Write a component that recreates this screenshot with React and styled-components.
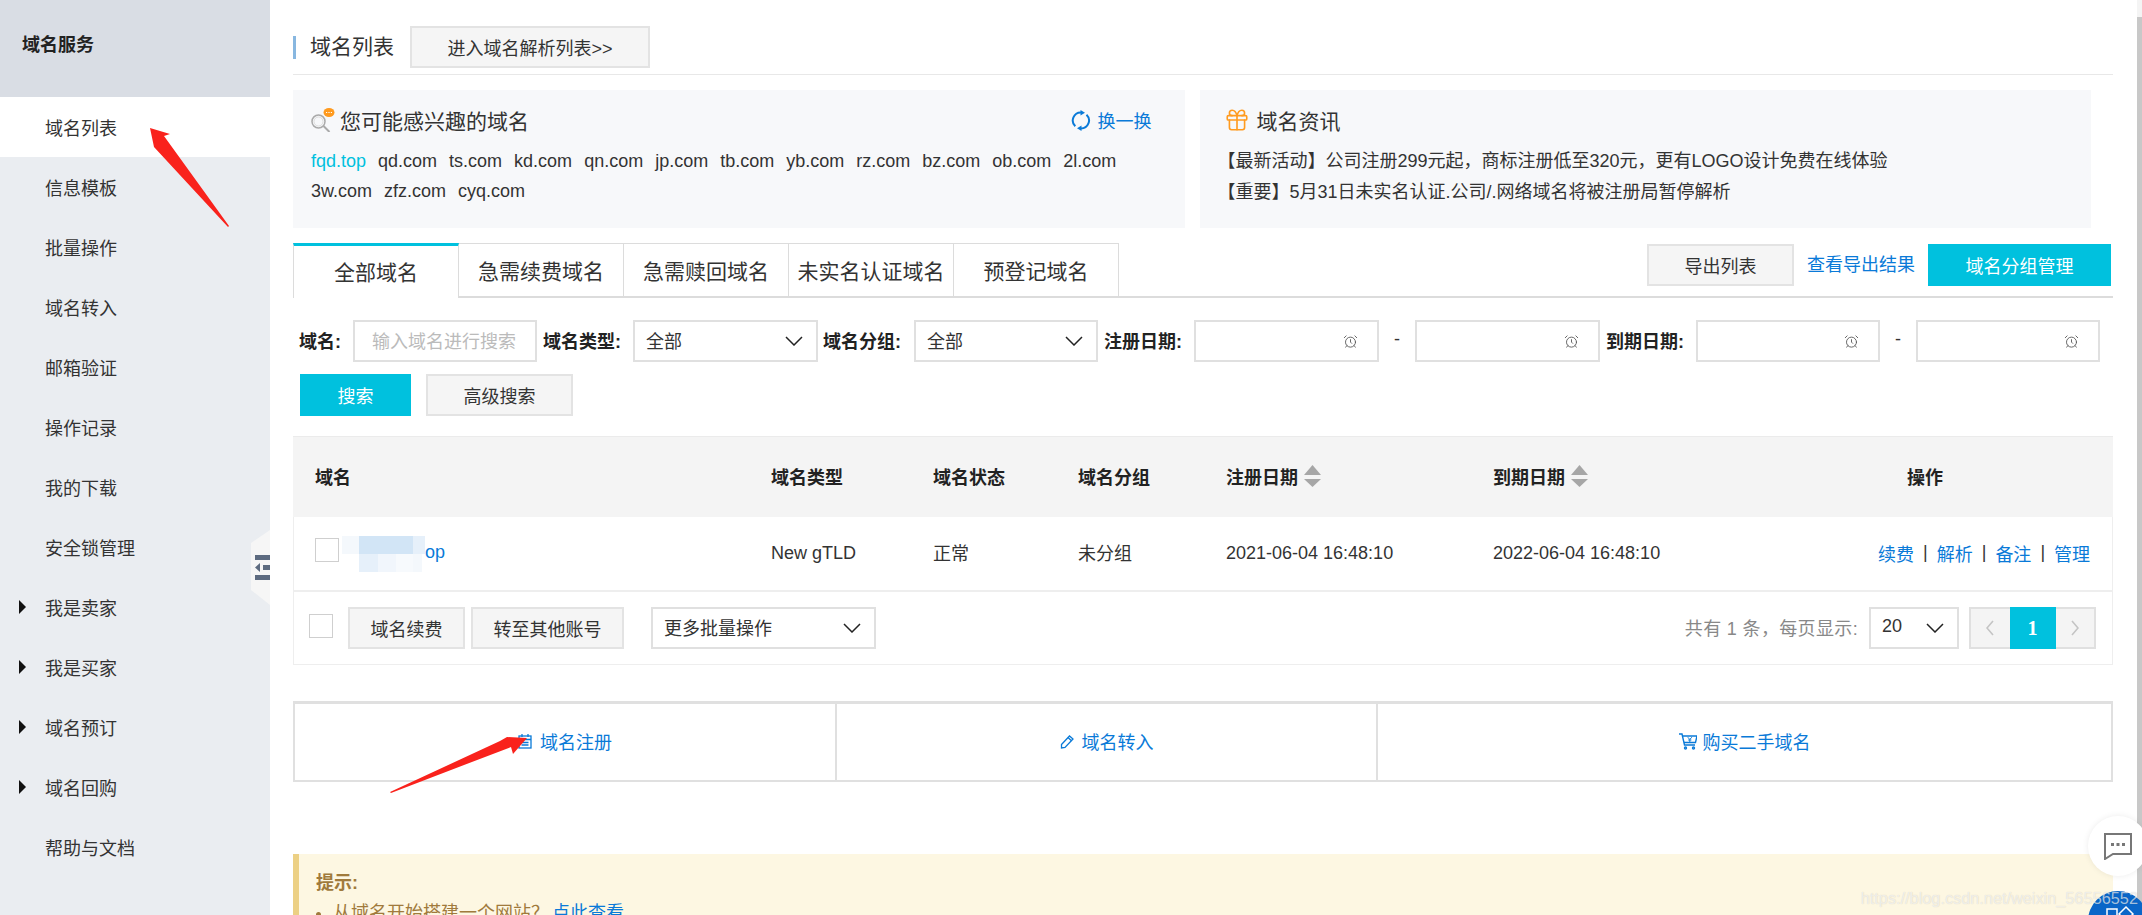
import React from 'react';
import styled, { createGlobalStyle } from 'styled-components';
import { AlarmClock, Gift } from 'lucide-react';

const CYAN = '#00c1de';
const LINK = '#0a7ad8';

const GlobalStyle = createGlobalStyle`
  html, body {
    margin: 0;
    height: 100%;
    overflow: hidden;
    background: #fff;
  }
  body {
    font-family: "Liberation Sans", "Noto Sans CJK SC", sans-serif;
    font-size: 18px;
    color: #333;
  }
  * { box-sizing: border-box; }
`;

const Page = styled.div`
  position: relative;
  display: flex;
  width: 2142px;
  height: 915px;
  overflow: hidden;
  background: #fff;
`;

/* left menu */
const Sidebar = styled.aside`
  position: relative;
  flex: none;
  width: 270px;
  background: #eaedf1;
`;

const SideTitle = styled.div`
  height: 97px;
  padding: 32px 0 0 22px;
  background: #d9dde4;
  font-weight: bold;
  line-height: 26px;
  color: #222;
`;

const SideItem = styled.div`
  display: flex;
  align-items: center;
  height: 60px;
  padding-left: 45px;
  background: ${(p) => (p.$active ? '#fff' : 'transparent')};

  ${(p) => p.$caret && `
    &::before {
      content: '';
      margin-left: -26px;
      margin-right: 19px;
      border-left: 7px solid #111;
      border-top: 7.5px solid transparent;
      border-bottom: 7.5px solid transparent;
    }
  `}
`;

const Handle = styled.svg`
  position: absolute;
  right: 0;
  top: 530px;
`;

/* main column */
const Main = styled.main`
  flex: none;
  width: 1820px;
  margin-left: 23px;
`;

const TitleBar = styled.div`
  display: flex;
  align-items: center;
  height: 75px;
  padding-top: 26px;
  padding-bottom: 6px;
  border-bottom: 1px solid #e8e8e8;
`;

const TitleMark = styled.span`
  width: 3px;
  height: 23px;
  background: #88b7e0;
`;

const PageTitle = styled.h1`
  margin: 0 16px 0 14px;
  font-size: 21px;
  font-weight: normal;
  line-height: 30px;
`;

const Button = styled.button`
  flex: none;
  width: ${(p) => p.$w}px;
  height: 42px;
  padding: 0;
  border: ${(p) => (p.$primary ? 'none' : '2px solid #e3e3e3')};
  background: ${(p) => (p.$primary ? CYAN : '#f5f5f5')};
  color: ${(p) => (p.$primary ? '#fff' : '#333')};
  font: inherit;
`;

const Panels = styled.div`
  display: flex;
  gap: 15px;
  width: 1798px;
  margin-top: 15px;
`;

const Panel = styled.section`
  flex: 1;
  height: 138px;
  padding: 15px 18px 0;
  background: #f7f8fa;
`;

const PanelHead = styled.div`
  display: flex;
  align-items: center;
  height: 30px;
  padding-left: ${(p) => p.$indent || 0}px;
  padding-right: 15px;
  font-size: 21px;
  svg { flex: none; }
`;

const PanelTitle = styled.span`
  margin-left: ${(p) => p.$gap}px;
`;

const Refresh = styled.a`
  display: flex;
  align-items: center;
  gap: 7px;
  margin-left: auto;
  color: ${LINK};
  font-size: 18px;
`;

const Domains = styled.div`
  display: flex;
  flex-wrap: wrap;
  gap: 0 12px;
  margin-top: 11px;
  line-height: 30px;
`;

const Domain = styled.a`
  color: ${(p) => (p.$hot ? CYAN : '#333')};
`;

const News = styled.p`
  margin: ${(p) => (p.$first ? '11px' : '0')} 0 0;
  line-height: 31px;
  white-space: nowrap;
`;

/* tabs */
const TabBar = styled.div`
  display: flex;
  justify-content: space-between;
  align-items: flex-start;
  height: 55px;
  margin-top: 15px;
  border-bottom: 2px solid #dcdcdc;
`;

const Tabs = styled.div`
  display: flex;
`;

const Tab = styled.div`
  display: flex;
  align-items: center;
  justify-content: center;
  width: ${(p) => (p.$active ? 166 : 165)}px;
  height: ${(p) => (p.$active ? 55 : 53)}px;
  padding-bottom: ${(p) => (p.$active ? 2 : 0)}px;
  font-size: 21px;
  background: #fff;
  border-top: ${(p) => (p.$active ? `3px solid ${CYAN}` : '1px solid #dcdcdc')};
  border-left: ${(p) => (p.$active ? '1px solid #dcdcdc' : 'none')};
  border-right: 1px solid #dcdcdc;
`;

const TabTools = styled.div`
  display: flex;
  align-items: center;
  gap: 13px;
  margin-top: 1px;
  padding-right: 2px;
`;

const ToolLink = styled.a`
  margin-top: -4px;
  color: ${LINK};
`;

/* search form */
const Filter = styled.div`
  display: flex;
  align-items: center;
  height: 42px;
  margin-top: 22px;
  padding-left: 6px;
`;

const FieldLabel = styled.label`
  flex: none;
  width: ${(p) => p.$w}px;
  margin-right: 10px;
  padding-bottom: 2px;
  font-weight: bold;
  color: #222;
  white-space: nowrap;
`;

const Box = styled.div`
  flex: none;
  display: flex;
  align-items: center;
  justify-content: space-between;
  width: ${(p) => p.$w}px;
  height: 42px;
  margin-right: ${(p) => p.$mr || 0}px;
  padding: 0 ${(p) => p.$pr || 13}px 3px ${(p) => p.$pl || 11}px;
  background: #fff;
  border: 2px solid #e0e0e0;
  color: ${(p) => (p.$muted ? '#bbb' : '#333')};
  white-space: nowrap;
  svg { flex: none; margin-top: 3px; }
`;

const Dash = styled.span`
  flex: none;
  width: 36px;
  padding-bottom: 3px;
  text-align: center;
`;

const Actions = styled.div`
  display: flex;
  gap: 15px;
  margin-top: 12px;
  padding-left: 7px;
`;

/* table */
const COLUMNS = '456px 162px 145px 148px 267px 385px 1fr';

const Head = styled.div`
  display: grid;
  grid-template-columns: ${COLUMNS};
  align-items: center;
  height: 81px;
  margin-top: 20px;
  padding: 0 0 3px 22px;
  background: #f4f4f4;
  border-top: 1px solid #ebebeb;
  font-weight: bold;
  color: #222;
`;

const HeadCell = styled.div`
  display: flex;
  align-items: center;
  gap: 6px;
  padding-left: ${(p) => p.$indent || 0}px;
`;

const Row = styled.div`
  display: grid;
  grid-template-columns: ${COLUMNS};
  align-items: center;
  height: 75px;
  padding-left: 21px;
  border-left: 1px solid #eee;
  border-right: 1px solid #eee;
  border-bottom: 2px solid #eee;
`;

const NameCell = styled.div`
  display: flex;
  align-items: center;
`;

const Check = styled.span`
  flex: none;
  width: 24px;
  height: 24px;
  margin-bottom: ${(p) => p.$up || 0}px;
  background: #fff;
  border: 1px solid #cfcfcf;
`;

const Mosaic = styled.svg`
  flex: none;
  margin: 1px 0 0 3px;
`;

const NameLink = styled.a`
  margin-bottom: 3px;
  color: ${LINK};
`;

const CjkCell = styled.span`
  padding-bottom: 3px;
`;

const Ops = styled.div`
  display: flex;
  align-items: center;
  gap: 9px;
  padding-bottom: 2px;
  a { color: ${LINK}; }
`;

const Footer = styled.div`
  display: flex;
  align-items: center;
  height: 73px;
  padding: 0 16px 0 15px;
  border-left: 1px solid #eee;
  border-right: 1px solid #eee;
  border-bottom: 1px solid #eee;
`;

const FooterButtons = styled.div`
  display: flex;
  gap: 6px;
  margin: 0 27px 0 15px;
`;

const Total = styled.span`
  margin-left: auto;
  margin-right: 11px;
  padding-bottom: 2px;
  color: #888;
  letter-spacing: 0.35px;
  white-space: nowrap;
`;

const Pager = styled.div`
  display: flex;
  flex: none;
  width: 127px;
  height: 42px;
  margin-left: 10px;
  border: 2px solid #e0e0e0;
`;

const PageCell = styled.span`
  flex: ${(p) => (p.$current ? '0 0 46px' : 1)};
  display: flex;
  align-items: center;
  justify-content: center;
  background: ${(p) => (p.$current ? CYAN : '#f4f4f4')};
  color: #fff;
  font-family: "Liberation Serif", serif;
  font-weight: bold;
  font-size: 20px;
  ${(p) => p.$current && 'margin: -2px 0; '}
`;

/* shortcuts */
const Shortcuts = styled.div`
  display: grid;
  grid-template-columns: 540px 541px 1fr;
  height: 81px;
  margin-top: 36px;
  border: 2px solid #e0e0e0;
  border-top-width: 3px;
`;

const Shortcut = styled.a`
  display: flex;
  align-items: center;
  justify-content: center;
  gap: ${(p) => p.$gap}px;
  padding-bottom: 2px;
  color: ${LINK};
  border-left: ${(p) => (p.$first ? 'none' : '2px solid #e0e0e0')};
`;

/* notice */
const Notice = styled.div`
  height: 120px;
  margin-top: 72px;
  padding: 14px 0 0 17px;
  background: #fdf7e2;
  border-left: 6px solid #ecd084;
  line-height: 30px;
  color: #a07a3c;
`;

const NoticeTitle = styled.div`
  font-weight: bold;
`;

const NoticeList = styled.ul`
  margin: 0;
  padding-left: 17px;
  a { margin-left: 3px; color: ${LINK}; }
`;

/* things on top of the page */
const ScrollTrack = styled.div`
  flex: none;
  width: 5px;
  margin-left: 24px;
  padding-top: 17px;
  background: #f4f4f4;
`;

const ScrollThumb = styled.div`
  height: 100%;
  background: #c8c8c8;
`;

const ChatBubble = styled.div`
  position: absolute;
  left: 2088px;
  top: 816px;
  display: flex;
  align-items: center;
  justify-content: center;
  width: 60px;
  height: 60px;
  border-radius: 50%;
  background: #fff;
  box-shadow: 0 0 6px rgba(0, 0, 0, 0.08);
`;

const BlueBubble = styled.svg`
  position: absolute;
  left: 2088px;
  top: 891px;
`;

const Watermark = styled.div`
  position: absolute;
  left: 1861px;
  top: 887px;
  font-size: 16.3px;
  line-height: 22px;
  color: rgba(255, 255, 255, 0.65);
  text-shadow: 0 0 1px rgba(0, 0, 0, 0.18);
  white-space: nowrap;
`;

const RedArrow = styled.svg`
  position: absolute;
  left: ${(p) => p.$x}px;
  top: ${(p) => p.$y}px;
`;

const Chevron = () => (
  <svg width="18" height="10" viewBox="0 0 18 10" fill="none" stroke="#222" strokeWidth="1.5">
    <path d="M1 1l8 8 8-8" />
  </svg>
);

const Clock = () => <AlarmClock size={15} strokeWidth={1.4} color="#555" />;

const SortIcon = () => (
  <svg width="17" height="22" viewBox="0 0 17 22" fill="#a6a6a6">
    <path d="M8.5 0L17 10H0z" />
    <path d="M0 14h17l-8.500 8z" />
  </svg>
);

const SearchIcon = () => (
  <svg width="24" height="24" viewBox="0 0 24 24" fill="none">
    <circle cx="7.500" cy="13.500" r="6.500" stroke="#aaa" strokeWidth="1.500" />
    <circle cx="7.500" cy="13.500" r="4.500" stroke="#ddd" strokeWidth="1" />
    <path d="M12.500 18l6 6" stroke="#aaa" strokeWidth="2" />
    <ellipse cx="18" cy="4.500" rx="5.500" ry="4.500" fill="#ff9a1e" />
    <path d="M15 4.500h1.200M17.400 4.500h1.200M19.800 4.500h1.200" stroke="#fff" strokeWidth="1" />
  </svg>
);

const RefreshIcon = () => (
  <svg width="20" height="21" viewBox="0 0 20 21" fill="none" stroke={LINK} strokeWidth="2">
    <path d="M4.300 16.300A8 8 0 0 1 10 2.500" />
    <path d="M15.500 4.700A8 8 0 0 1 10 18.500" />
    <path d="M9.500 0L14 2.700 9.500 5.400z" fill={LINK} stroke="none" />
    <path d="M10.500 15.600L6 18.300l4.500 2.700z" fill={LINK} stroke="none" />
  </svg>
);

const CalendarIcon = () => (
  <svg width="14" height="15" viewBox="0 0 14 15" fill="none" stroke={LINK} strokeWidth="1.300">
    <rect x="1" y="2" width="12" height="12" />
    <path d="M1 5.500h12M3.500 8.500h7M3.500 11h7M4 0v3M10 0v3" />
  </svg>
);

const PencilIcon = () => (
  <svg width="15" height="15" viewBox="0 0 15 15" fill="none" stroke={LINK} strokeWidth="1.300">
    <path d="M1.500 10.500L9.500 2l3.500 3-8 8.500-3.500.500z" />
    <path d="M8 3.500l3.500 3.200" />
  </svg>
);

const CartIcon = () => (
  <svg width="18" height="17" viewBox="0 0 18 17" fill="none" stroke={LINK} strokeWidth="1.400">
    <path d="M0 1h3l2.500 11H16" />
    <path d="M3.500 3H18l-1.500 6.500H5" />
    <circle cx="6.500" cy="15" r="1" />
    <circle cx="14.500" cy="15" r="1" />
    <path d="M8.800 4.200L10.800 6.500l2-2.300M10.800 6.500v2.500M9.200 7h3.200" strokeWidth="1" />
  </svg>
);

const MENU = ['域名列表', '信息模板', '批量操作', '域名转入', '邮箱验证', '操作记录', '我的下载', '安全锁管理'];
const MENU_MORE = ['我是卖家', '我是买家', '域名预订', '域名回购'];
const DOMAINS = ['qd.com', 'ts.com', 'kd.com', 'qn.com', 'jp.com', 'tb.com', 'yb.com', 'rz.com', 'bz.com', 'ob.com', '2l.com', '3w.com', 'zfz.com', 'cyq.com'];
const TABS = ['全部域名', '急需续费域名', '急需赎回域名', '未实名认证域名', '预登记域名'];

export default function App() {
  return (
    <Page>
      <GlobalStyle />
      <Sidebar>
        <SideTitle>域名服务</SideTitle>
        {MENU.map((m, i) => (
          <SideItem key={m} $active={i === 0}>{m}</SideItem>
        ))}
        {MENU_MORE.map((m) => (
          <SideItem key={m} $caret>{m}</SideItem>
        ))}
        <SideItem>帮助与文档</SideItem>
        <Handle width="19" height="75" viewBox="0 0 19 75">
          <path d="M19 0L0 13v47l19 15z" fill="#f6f6f6" />
          <path d="M4 25h15v5H4zM12 35h7v5h-7zM4 45h15v5H4z" fill="#5d6b80" />
          <path d="M9 33v9l-5-4.500z" fill="#5d6b80" />
        </Handle>
      </Sidebar>

      <Main>
        <TitleBar>
          <TitleMark />
          <PageTitle>域名列表</PageTitle>
          <Button $w={240}>进入域名解析列表&gt;&gt;</Button>
        </TitleBar>

        <Panels>
          <Panel>
            <PanelHead>
              <SearchIcon />
              <PanelTitle $gap={5}>您可能感兴趣的域名</PanelTitle>
              <Refresh><RefreshIcon />换一换</Refresh>
            </PanelHead>
            <Domains>
              <Domain $hot>fqd.top</Domain>
              {DOMAINS.map((d) => <Domain key={d}>{d}</Domain>)}
            </Domains>
          </Panel>
          <Panel>
            <PanelHead $indent={6}>
              <Gift size={26} strokeWidth={1.5} color="#ff9b20" />
              <PanelTitle $gap={7}>域名资讯</PanelTitle>
            </PanelHead>
            <News $first>【最新活动】公司注册299元起，商标注册低至320元，更有LOGO设计免费在线体验</News>
            <News>【重要】5月31日未实名认证.公司/.网络域名将被注册局暂停解析</News>
          </Panel>
        </Panels>

        <TabBar>
          <Tabs>
            {TABS.map((t, i) => <Tab key={t} $active={i === 0}>{t}</Tab>)}
          </Tabs>
          <TabTools>
            <Button $w={147}>导出列表</Button>
            <ToolLink>查看导出结果</ToolLink>
            <Button $w={183} $primary>域名分组管理</Button>
          </TabTools>
        </TabBar>

        <Filter>
          <FieldLabel $w={44}>域名:</FieldLabel>
          <Box $w={184} $pl={17} $muted $mr={6}>输入域名进行搜索</Box>
          <FieldLabel $w={80}>域名类型:</FieldLabel>
          <Box $w={185} $mr={5}>全部<Chevron /></Box>
          <FieldLabel $w={81}>域名分组:</FieldLabel>
          <Box $w={184} $mr={6}>全部<Chevron /></Box>
          <FieldLabel $w={80}>注册日期:</FieldLabel>
          <Box $w={185} $pr={19}><span /><Clock /></Box>
          <Dash>-</Dash>
          <Box $w={185} $pr={19} $mr={6}><span /><Clock /></Box>
          <FieldLabel $w={80}>到期日期:</FieldLabel>
          <Box $w={184} $pr={19}><span /><Clock /></Box>
          <Dash>-</Dash>
          <Box $w={184} $pr={19}><span /><Clock /></Box>
        </Filter>

        <Actions>
          <Button $w={111} $primary>搜索</Button>
          <Button $w={147}>高级搜索</Button>
        </Actions>

        <Head>
          <HeadCell>域名</HeadCell>
          <HeadCell>域名类型</HeadCell>
          <HeadCell>域名状态</HeadCell>
          <HeadCell>域名分组</HeadCell>
          <HeadCell>注册日期<SortIcon /></HeadCell>
          <HeadCell>到期日期<SortIcon /></HeadCell>
          <HeadCell $indent={29}>操作</HeadCell>
        </Head>
        <Row>
          <NameCell>
            <Check $up={7} />
            <Mosaic width="83" height="36" viewBox="0 0 83 36">
              <rect x="0" y="0" width="17" height="18" fill="#f4f8fc" />
              <rect x="17" y="0" width="54" height="18" fill="#d2e5f6" />
              <rect x="71" y="0" width="12" height="18" fill="#e6f0fa" />
              <rect x="17" y="18" width="19" height="18" fill="#e6f0fa" />
              <rect x="36" y="18" width="18" height="18" fill="#f1f6fc" />
              <rect x="54" y="18" width="17" height="18" fill="#f7fafd" />
              <rect x="71" y="18" width="9" height="18" fill="#f4f8fc" />
            </Mosaic>
            <NameLink>op</NameLink>
          </NameCell>
          <span>New gTLD</span>
          <CjkCell>正常</CjkCell>
          <CjkCell>未分组</CjkCell>
          <span>2021-06-04 16:48:10</span>
          <span>2022-06-04 16:48:10</span>
          <Ops>
            <a>续费</a>|<a>解析</a>|<a>备注</a>|<a>管理</a>
          </Ops>
        </Row>
        <Footer>
          <Check $up={4} />
          <FooterButtons>
            <Button $w={117}>域名续费</Button>
            <Button $w={153}>转至其他账号</Button>
          </FooterButtons>
          <Box $w={225}>更多批量操作<Chevron /></Box>
          <Total>共有 1 条，每页显示:</Total>
          <Box $w={90}>20<Chevron /></Box>
          <Pager>
            <PageCell>
              <svg width="8" height="16" viewBox="0 0 8 16" fill="none" stroke="#c4c4c4" strokeWidth="1.600"><path d="M7 1L1 8l6 7" /></svg>
            </PageCell>
            <PageCell $current>1</PageCell>
            <PageCell>
              <svg width="8" height="16" viewBox="0 0 8 16" fill="none" stroke="#c4c4c4" strokeWidth="1.600"><path d="M1 1l6 7-6 7" /></svg>
            </PageCell>
          </Pager>
        </Footer>

        <Shortcuts>
          <Shortcut $first $gap={8}><CalendarIcon />域名注册</Shortcut>
          <Shortcut $gap={7}><PencilIcon />域名转入</Shortcut>
          <Shortcut $gap={6}><CartIcon />购买二手域名</Shortcut>
        </Shortcuts>

        <Notice>
          <NoticeTitle>提示:</NoticeTitle>
          <NoticeList>
            <li>从域名开始搭建一个网站？<a>点此查看</a></li>
          </NoticeList>
        </Notice>
      </Main>

      <ScrollTrack><ScrollThumb /></ScrollTrack>

      <ChatBubble>
        <svg width="28" height="27" viewBox="0 0 28 27" fill="none">
          <path d="M1 1h26v20H9l-8 5z" stroke="#777" strokeWidth="2" />
          <path d="M7 10h3v3H7zM12.500 10h3v3h-3zM18 10h3v3h-3z" fill="#777" />
        </svg>
      </ChatBubble>
      <BlueBubble width="54" height="24" viewBox="0 0 54 24">
        <circle cx="30" cy="30" r="30" fill="#0a66c8" />
        <rect x="19" y="18" width="10" height="10" fill="none" stroke="#fff" strokeWidth="1.500" />
        <path d="M38 16l7 7-7 7-7-7z" fill="none" stroke="#fff" strokeWidth="1.500" />
      </BlueBubble>
      <Watermark>https://blog.csdn.net/weixin_56556552</Watermark>

      <RedArrow $x={150} $y={128} width="80" height="100" viewBox="0 0 80 100">
        <path d="M0 0L20 6l-6 2 65 90-1 1L4 19z" fill="#f9221c" />
      </RedArrow>
      <RedArrow $x={390} $y={736} width="138" height="58" viewBox="0 0 138 58">
        <path d="M137 2L123 18l-2-7L1 57l-1-1L110 5 117 1z" fill="#f9221c" />
      </RedArrow>
    </Page>
  );
}
